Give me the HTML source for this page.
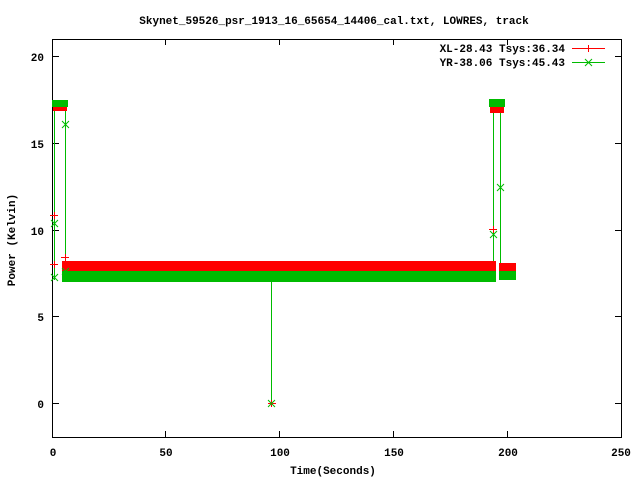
<!DOCTYPE html>
<html><head><meta charset="utf-8"><style>
html,body{margin:0;padding:0;background:#fff;}
svg{display:block;}
text{font-family:"Liberation Mono","DejaVu Sans Mono",monospace;font-size:11px;font-weight:bold;fill:#000;}
</style></head><body>
<svg width="640" height="480" viewBox="0 0 640 480" xmlns="http://www.w3.org/2000/svg">
<rect width="640" height="480" fill="#fff"/>
<text x="334" y="24" text-anchor="middle">Skynet_59526_psr_1913_16_65654_14406_cal.txt, LOWRES, track</text>
<rect x="52.5" y="39.5" width="569" height="398" fill="none" stroke="#000" stroke-width="1"/>
<g stroke="#000">
<line x1="52" y1="403.5" x2="59" y2="403.5"/><line x1="615" y1="403.5" x2="621" y2="403.5"/>
<line x1="52" y1="316.5" x2="59" y2="316.5"/><line x1="615" y1="316.5" x2="621" y2="316.5"/>
<line x1="52" y1="230.5" x2="59" y2="230.5"/><line x1="615" y1="230.5" x2="621" y2="230.5"/>
<line x1="52" y1="143.5" x2="59" y2="143.5"/><line x1="615" y1="143.5" x2="621" y2="143.5"/>
<line x1="52" y1="56.5" x2="59" y2="56.5"/><line x1="615" y1="56.5" x2="621" y2="56.5"/>
<line x1="165.5" y1="437" x2="165.5" y2="431"/><line x1="165.5" y1="39" x2="165.5" y2="45"/>
<line x1="279.5" y1="437" x2="279.5" y2="431"/><line x1="279.5" y1="39" x2="279.5" y2="45"/>
<line x1="393.5" y1="437" x2="393.5" y2="431"/><line x1="393.5" y1="39" x2="393.5" y2="45"/>
<line x1="507.5" y1="437" x2="507.5" y2="431"/><line x1="507.5" y1="39" x2="507.5" y2="45"/>
</g>
<g text-anchor="end">
<text x="44" y="408">0</text>
<text x="44" y="321">5</text>
<text x="44" y="235">10</text>
<text x="44" y="148">15</text>
<text x="44" y="61">20</text>
</g>
<g text-anchor="middle">
<text x="53" y="456">0</text>
<text x="166" y="456">50</text>
<text x="280" y="456">100</text>
<text x="394" y="456">150</text>
<text x="508" y="456">200</text>
<text x="621" y="456">250</text>
<text x="333" y="474">Time(Seconds)</text>
</g>
<text transform="translate(15,240) rotate(-90)" text-anchor="middle">Power (Kelvin)</text>
<text x="565" y="52" text-anchor="end">XL-28.43 Tsys:36.34</text>
<text x="565" y="66" text-anchor="end">YR-38.06 Tsys:45.43</text>
<line x1="572" y1="48.5" x2="605" y2="48.5" stroke="#f00"/>
<line x1="588.5" y1="45" x2="588.5" y2="52" stroke="#f00"/>
<line x1="572" y1="62.5" x2="605" y2="62.5" stroke="#0b0"/>
<path d="M585 59 L592 66 M592 59 L585 66" stroke="#0b0"/>
<g stroke="#0b0" stroke-width="1">
<line x1="54.5" y1="104" x2="54.5" y2="280"/>
<line x1="65.5" y1="104" x2="65.5" y2="276"/>
<line x1="493.5" y1="104" x2="493.5" y2="276"/>
<line x1="500.5" y1="104" x2="500.5" y2="276"/>
<line x1="271.5" y1="276" x2="271.5" y2="403"/>
</g>
<rect x="53" y="103" width="14" height="8" fill="#f00"/>
<rect x="52" y="100" width="16" height="7" fill="#0b0"/>
<rect x="490" y="103" width="14" height="10" fill="#f00"/>
<rect x="489" y="99" width="16" height="8" fill="#0b0"/>
<rect x="62" y="261" width="434" height="10" fill="#f00"/>
<rect x="499" y="263" width="17" height="8" fill="#f00"/>
<rect x="62" y="271" width="434" height="11" fill="#0b0"/>
<rect x="499" y="271" width="17" height="9" fill="#0b0"/>
<g stroke="#f00">
<path d="M50 215.5h8M54.5 212v7"/>
<path d="M50 264.5h8M54.5 261v7"/>
<path d="M61 257.5h8M65.5 254v7"/>
<path d="M489 229.5h8M493.5 226v7"/>
<path d="M268 403.5h8M271.5 400v7"/>
</g>
<g stroke="#0b0">
<path d="M51 220l7 7M58 220l-7 7"/>
<path d="M51 274l7 7M58 274l-7 7"/>
<path d="M62 121l7 7M69 121l-7 7"/>
<path d="M62 268l7 7M69 268l-7 7"/>
<path d="M490 231l7 7M497 231l-7 7"/>
<path d="M497 184l7 7M504 184l-7 7"/>
<path d="M268 400l7 7M275 400l-7 7"/>
</g>
</svg>
</body></html>
